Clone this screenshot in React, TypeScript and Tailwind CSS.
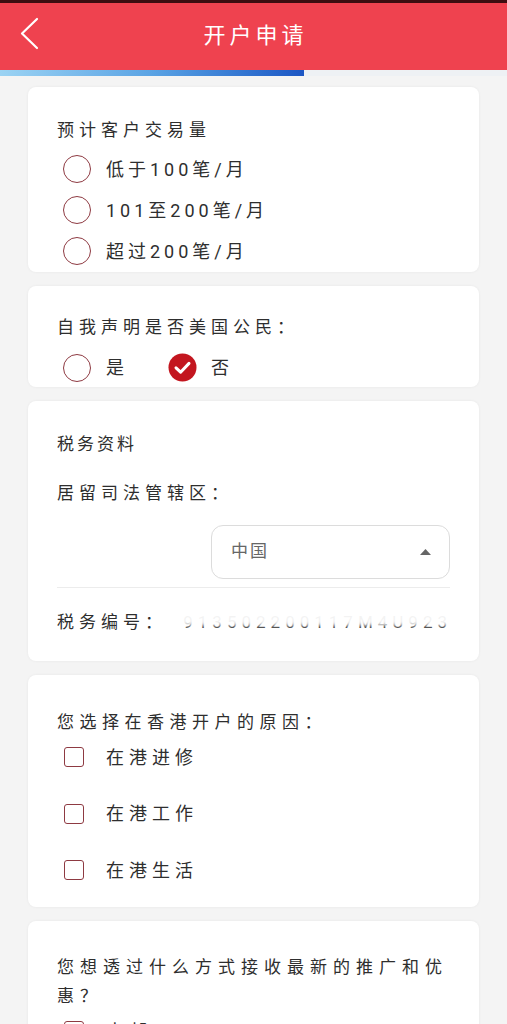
import React from "react";

const font = "font-['Roboto','Noto_Sans_CJK_SC',sans-serif]";

function Radio({ checked }: { checked?: boolean }) {
  if (checked) {
    return (
      <svg width="29" height="29" viewBox="0 0 29 29" className="shrink-0">
        <circle cx="14.5" cy="14.5" r="14" fill="#c3161f" />
        <path d="M8 14.8 L12.6 19.2 L21 10.4" fill="none" stroke="#fff" strokeWidth="3" strokeLinecap="round" strokeLinejoin="round" />
      </svg>
    );
  }
  return <div className="w-[28px] h-[28px] rounded-full border-[1.8px] border-[#8e3a42] shrink-0" />;
}

function Checkbox() {
  return <div className="w-[20px] h-[20px] rounded-[3px] border-[1.8px] border-[#8e3a42] shrink-0" />;
}

function RadioRow({ label }: { label: string }) {
  return (
    <div className="h-[41px] flex items-center pl-[6px]">
      <Radio />
      <span className="ml-[15px] text-[18px] tracking-[4px] text-[#2e2e2e]">{label}</span>
    </div>
  );
}

function CheckRow({ label }: { label: string }) {
  return (
    <div className="h-[56.5px] flex items-center pl-[7px]">
      <Checkbox />
      <span className="ml-[22px] text-[18px] tracking-[5px] text-[#2e2e2e]">{label}</span>
    </div>
  );
}

function Card({ children, className = "" }: { children: React.ReactNode; className?: string }) {
  return (
    <div className={`bg-white rounded-[8px] shadow-[0_0_3px_rgba(0,0,0,0.06)] px-[29px] ${className}`}>
      {children}
    </div>
  );
}

export default function App() {
  return (
    <div className={`${font} w-[507px] h-[1024px] overflow-hidden bg-[#f4f4f4]`}>
      <div className="h-[3px] bg-[#3d0d10]" />
      <div className="h-[67px] bg-[#ef424f] flex items-center relative">
        <svg width="24" height="36" viewBox="0 0 24 36" className="ml-[18px] mt-[-4px]">
          <path d="M19 2 L4 16.5 L19 31" fill="none" stroke="#fff" strokeWidth="2.2" strokeLinecap="round" strokeLinejoin="round" />
        </svg>
        <div className="absolute left-0 right-0 top-0 bottom-0 flex items-center justify-center pointer-events-none">
          <span className="text-white text-[22px] tracking-[4px] pl-[4px] mt-[-3px]">开户申请</span>
        </div>
      </div>
      <div className="h-[6px] bg-[#eef1f4]">
        <div className="h-full w-[304px] bg-gradient-to-r from-[#9bd3f3] via-[#5aa3e4] to-[#1d56c4]" />
      </div>

      <div className="flex flex-col gap-[14px] px-[28px] pt-[11px]">
        <Card className="h-[185px] pt-[31px]">
          <div className="text-[17px] leading-[24px] tracking-[5px] text-[#2e2e2e]">预计客户交易量</div>
          <div className="mt-[6.5px]">
            <RadioRow label="低于100笔/月" />
            <RadioRow label="101至200笔/月" />
            <RadioRow label="超过200笔/月" />
          </div>
        </Card>

        <Card className="h-[101px] pt-[29px]">
          <div className="text-[17px] leading-[24px] tracking-[5px] text-[#2e2e2e]">自我声明是否美国公民：</div>
          <div className="mt-[8px] h-[41px] flex items-center pl-[6px]">
            <Radio />
            <span className="ml-[15px] text-[18px] text-[#2e2e2e]">是</span>
            <div className="ml-[44px]">
              <Radio checked />
            </div>
            <span className="ml-[14px] text-[18px] text-[#2e2e2e]">否</span>
          </div>
        </Card>

        <Card className="h-[260px] pt-[31px]">
          <div className="text-[17px] leading-[24px] tracking-[3px] text-[#2e2e2e]">税务资料</div>
          <div className="mt-[25px] text-[17px] leading-[24px] tracking-[5px] text-[#2e2e2e]">居留司法管辖区：</div>
          <div className="flex justify-end mt-[20px]">
            <div className="w-[239px] h-[54px] rounded-[12px] border border-[#dcdcdc] flex items-center justify-between pl-[19px] pr-[18px]">
              <span className="text-[17px] tracking-[2px] text-[#666]">中国</span>
              <svg width="11" height="6" viewBox="0 0 11 6">
                <path d="M0 6 L5.5 0 L11 6 Z" fill="#666" />
              </svg>
            </div>
          </div>
          <div className="mt-[8px] h-px bg-[#ececec]" />
          <div className="mt-[23px] flex items-center h-[24px] relative">
            <span className="text-[17px] tracking-[5px] text-[#2e2e2e] shrink-0">税务编号：</span>
            <span className="ml-auto mr-[-2px] text-[17px] tracking-[5px] text-[#222] whitespace-nowrap">913502200117M4U923</span>
            <div className="absolute left-[118px] right-[-16px] top-[-6px] h-[21px] bg-white/95 blur-[2px]" />
          </div>
        </Card>

        <Card className="h-[232px] pt-[35px]">
          <div className="text-[17px] leading-[24px] tracking-[5.5px] text-[#2e2e2e]">您选择在香港开户的原因：</div>
          <div className="mt-[-5px]">
            <CheckRow label="在港进修" />
            <CheckRow label="在港工作" />
            <CheckRow label="在港生活" />
          </div>
        </Card>

        <Card className="h-[200px] pt-[32px]">
          <div className="text-[17px] leading-[29px] tracking-[6px] text-[#2e2e2e]">您想透过什么方式接收最新的推广和优惠？</div>
          <div className="mt-[-8px]">
            <CheckRow label="电邮" />
          </div>
        </Card>
      </div>
    </div>
  );
}
